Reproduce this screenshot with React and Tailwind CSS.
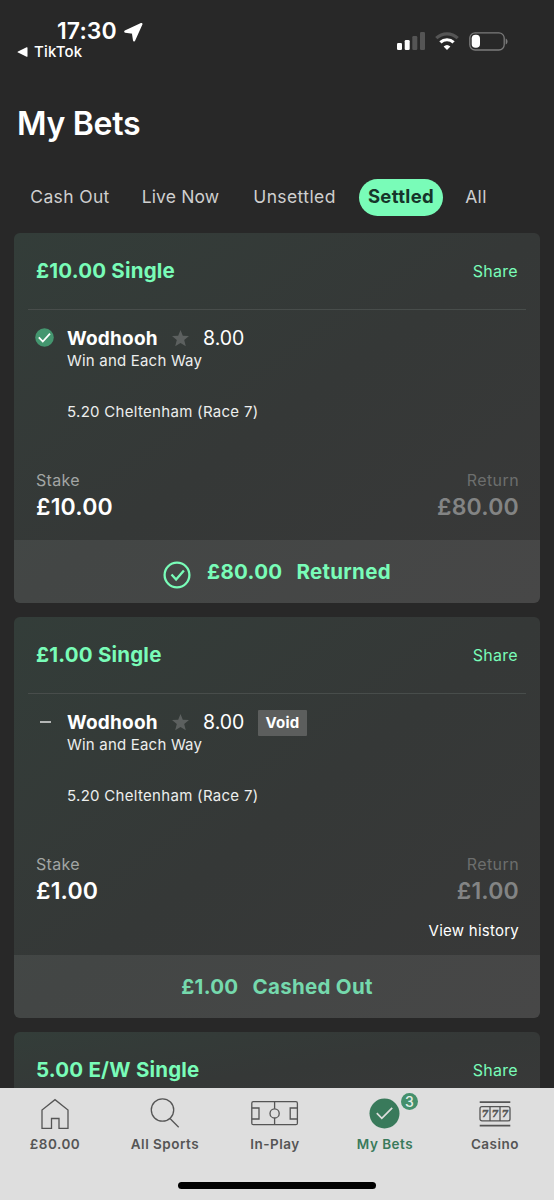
import React, { useState } from "react";

const TABS = [
  { name: "Cash Out", box: "w-[112px]", text: "tracking-[0.35px]" },
  { name: "Live Now", box: "w-[109px]", text: "tracking-[0.15px]" },
  { name: "Unsettled", box: "w-[119px]", text: "tracking-[0.4px]" },
  { name: "Settled", box: "w-[94px]", text: "tracking-[0.35px]" },
  { name: "All", box: "w-[56px]", text: "tracking-[0.35px]" },
];

const BETS = [
  { id: 1, title: "£10.00 Single", stake: "£10.00", returned: "£80.00", status: "won", footer: ["£80.00", "Returned"] },
  { id: 2, title: "£1.00 Single", stake: "£1.00", returned: "£1.00", status: "void", history: true, footer: ["£1.00", "Cashed Out"] },
  { id: 3, title: "5.00 E/W Single", collapsed: true },
];

function StatusBar() {
  return (
    <div className="h-[72px] flex justify-between pt-[18px] pl-[17px] pr-[46px]">
      <div>
        <div className="flex items-center gap-[7px] pl-[40px] pt-px h-[26px]">
          <span className="text-[23px] leading-[25px] font-semibold tracking-[0.1px]">17:30</span>
          <svg width="19" height="20" viewBox="0 0 19 20" fill="currentColor" stroke="currentColor" strokeWidth="2.200" strokeLinejoin="round">
            <path d="M17.400 2 1.300 9.600 8.900 10.600 10.100 18.300Z" />
          </svg>
        </div>
        <div className="flex items-center gap-[6px] h-[16px]">
          <svg width="11" height="10" viewBox="0 0 11 10" fill="currentColor">
            <path d="M10.500.8v8.400c0 .5-.4.700-.9.500L1 5.600c-.6-.3-.6-.900 0-1.200L9.600.3c.5-.2.900 0 .9.500Z" />
          </svg>
          <span className="text-[15px] leading-[18px] font-medium tracking-[0.2px]">TikTok</span>
        </div>
      </div>

      <div className="flex items-center gap-[10px] h-[46px]">
        <svg width="28" height="18" viewBox="0 0 28 18">
          <rect x="0" y="11" width="5" height="7" rx="1.300" fill="#fff" />
          <rect x="7.700" y="8" width="5" height="10" rx="1.300" fill="#fff" />
          <rect x="15.300" y="4" width="5" height="14" rx="1.300" fill="#555" />
          <rect x="23" y="0" width="5" height="18" rx="1.300" fill="#555" />
        </svg>
        <svg width="24" height="18" viewBox="0 0 24 18" fill="none" strokeWidth="3.200">
          <path d="M1.300 6.200a15.600 15.600 0 0 1 21.400 0" stroke="#555" />
          <path d="M5.400 10.400a9.600 9.600 0 0 1 13.200 0" stroke="#fff" />
          <path d="M12 18 8.600 14.500a5 5 0 0 1 6.800 0Z" fill="#fff" />
        </svg>
        <svg width="39" height="19" viewBox="0 0 39 19">
          <rect x=".8" y=".8" width="34.400" height="17.200" rx="5.300" fill="none" stroke="#7b7b7b" strokeWidth="1.300" />
          <rect x="2.700" y="2.800" width="8.300" height="13" rx="3.800" fill="#fff" />
          <path d="M36.700 6.500c2.400 1 2.400 5 0 6Z" fill="#7b7b7b" />
        </svg>
      </div>
    </div>
  );
}

function WonIcon() {
  return (
    <svg width="19" height="19" viewBox="0 0 19 19">
      <circle cx="9.500" cy="9.500" r="9.300" fill="#44966f" />
      <path d="m3.800 9.300 4 4.200 7.200-7.800" fill="none" stroke="#fff" strokeWidth="1.800" />
    </svg>
  );
}

function Star() {
  return (
    <svg className="-mt-px" width="17" height="17" viewBox="0 0 17 17" fill="#5c605f">
      <path d="M8.500 0l2.300 5.700 6.200.4-4.800 4 1.600 6.200-5.300-3.400-5.300 3.400 1.600-6.200L0 6.100l6.200-.4Z" />
    </svg>
  );
}

function BetHeader({ title }) {
  return (
    <div className="mx-[14px] px-2 h-[77px] flex items-center justify-between border-b border-[#484d4b] text-[#79fcb8]">
      <span className="text-[20.500px] font-bold tracking-[0.2px]">{title}</span>
      <span className="text-[16px] tracking-[0.3px] pb-px">Share</span>
    </div>
  );
}

function BetDetails({ bet }) {
  return (
    <>
      <div className="flex pl-[21px] pt-4">
        <div className="w-[32px] pt-[2px]">
          {bet.status === "won" ? <WonIcon /> : <div className="w-[11px] h-[1.500px] bg-[#b4b7b6] ml-[5px] mt-[9px]" />}
        </div>
        <div>
          <div className="flex items-center h-[26px]">
            <span className="text-[19px] font-bold tracking-[0.2px] w-[105px]">Wodhooh</span>
            <Star />
            <span className="text-[19.500px] w-[69px] pl-[14px]">8.00</span>
            {bet.status === "void" && (
              <span className="bg-[#5c5e5d] rounded-[1px] w-[49px] h-[26px] flex items-center justify-center text-[15px] font-bold tracking-[0.3px]">Void</span>
            )}
          </div>
          <div className="text-[15px] leading-[18px] tracking-[0.2px] text-[#eceeed]">Win and Each Way</div>
          <div className="text-[15px] leading-[20px] tracking-[0.3px] text-[#eceeed] mt-[32px]">5.20 Cheltenham (Race 7)</div>
        </div>
      </div>

      <div className="flex justify-between pl-[22px] pr-[21px] mt-[48px]">
        <div>
          <div className="text-[16px] leading-[20px] tracking-[0.3px] text-[#a2a5a4]">Stake</div>
          <div className="text-[23px] leading-[35px] font-semibold tracking-[0.2px]">{bet.stake}</div>
        </div>
        <div className="text-right">
          <div className="text-[16px] leading-[20px] tracking-[0.4px] text-[#6c6e6d]">Return</div>
          <div className="text-[23px] leading-[35px] font-semibold tracking-[0.2px] text-[#838484]">{bet.returned}</div>
        </div>
      </div>
      {bet.history && <div className="px-[21px] pt-[12px] h-[31px] text-right text-[15px] leading-[20px] tracking-[0.25px]">View history</div>}

      <div className={`mt-[15px] h-[63px] pt-px bg-white/7 flex items-center justify-center text-[20.500px] font-bold tracking-[0.3px] ${bet.status === "won" ? "text-[#79fcb8]" : "text-[#75d9ad]"}`}>
        {bet.status === "won" && (
          <svg className="mr-4 mt-[6px]" width="28" height="28" viewBox="0 0 28 28" fill="none" stroke="currentColor" strokeWidth="2.300">
            <circle cx="14" cy="14" r="12.400" />
            <path d="m8.500 13.500 4.600 5 7.800-9" />
          </svg>
        )}
        <span className="mr-[14px]">{bet.footer[0]}</span>
        <span>{bet.footer[1]}</span>
      </div>
    </>
  );
}

function BetCard({ bet }) {
  return (
    <div className="rounded-[6px] overflow-hidden bg-linear-to-br from-[#333d39] via-[#353837] to-[#393939]">
      <BetHeader title={bet.title} />
      {!bet.collapsed && <BetDetails bet={bet} />}
    </div>
  );
}

function HomeIcon() {
  return (
    <svg width="30" height="32" viewBox="0 0 30 32" fill="none" stroke="currentColor" strokeWidth="1.300">
      <path d="M2 30.300V12L15 1.700 28 12v18.300h-9v-9.800h-7.500v9.800Z" />
    </svg>
  );
}

function SearchIcon() {
  return (
    <svg width="30" height="32" viewBox="0 0 30 32" fill="none" stroke="currentColor" strokeWidth="1.300">
      <circle cx="12.500" cy="12" r="11.200" />
      <path d="m20 20.500 8.700 8.700" />
    </svg>
  );
}

function PitchIcon() {
  return (
    <svg width="48" height="32" viewBox="0 0 48 32" fill="none" stroke="currentColor" strokeWidth="1.300">
      <rect x=".8" y="3.700" width="45.600" height="23" rx="1.500" />
      <path d="M23.600 3.700v7m0 9.300v6.700M.8 10h7.200v11H.8M46.400 10h-7.200v11h7.200" />
      <circle cx="23.600" cy="15.400" r="4.600" />
    </svg>
  );
}

function SlotsIcon() {
  return (
    <svg width="32" height="32" viewBox="0 0 32 32" fill="none" stroke="currentColor" strokeWidth="1.300">
      <path d="M.7 4.100h30.600M.7 27.700h30.600" strokeWidth="1.800" />
      <rect x="1" y="8.700" width="30" height="14.200" rx="2" />
      <path d="M11 8.700v14.200M21 8.700v14.200" />
      <g fill="currentColor" stroke="currentColor" strokeWidth=".5" fontFamily="DejaVu Serif, serif" fontWeight="700" fontStyle="italic" fontSize="9.500" textAnchor="middle">
        <text x="6.100" y="19.300">7</text>
        <text x="16" y="19.300">7</text>
        <text x="26" y="19.300">7</text>
      </g>
    </svg>
  );
}

function MyBetsIcon() {
  return (
    <div className="relative">
      <svg width="32" height="32" viewBox="0 0 32 32">
        <circle cx="15.500" cy="15.500" r="15" fill="#397a5b" />
        <path d="m7.800 15.200 5 5.200 10.400-10.600" fill="none" stroke="#dedede" strokeWidth="1.700" />
      </svg>
      <span className="absolute -top-[5px] left-[32px] w-[17px] h-[17px] rounded-full bg-[#44906c] text-[#e6eee9] text-[14px] font-medium flex items-center justify-center">3</span>
    </div>
  );
}

const NAV = [
  { name: "£80.00", Icon: HomeIcon },
  { name: "All Sports", Icon: SearchIcon },
  { name: "In-Play", Icon: PitchIcon },
  { name: "My Bets", Icon: MyBetsIcon, active: true },
  { name: "Casino", Icon: SlotsIcon },
];

function BottomNav() {
  return (
    <nav className="h-[112px] shrink-0 bg-[#dedede] text-[#555] flex flex-col items-center">
      <div className="flex w-full pr-[4px] pt-[10px]">
        {NAV.map(({ name, Icon, active }) => (
          <button key={name} className={`flex-1 flex flex-col items-center ${active ? "text-[#397a5b]" : ""}`}>
            <Icon />
            <span className="text-[13.500px] leading-[18px] mt-[5px] font-semibold tracking-[0.5px]">{name}</span>
          </button>
        ))}
      </div>
      <div className="w-[198px] h-[7px] rounded-full bg-black mt-[29px]" />
    </nav>
  );
}

export default function App() {
  const [tab, setTab] = useState("Settled");

  return (
    <div className="h-[1200px] w-[554px] flex flex-col overflow-hidden bg-[#282828] text-white font-['Inter',sans-serif]">
      <StatusBar />
      <h1 className="pl-[17px] pt-[32px] text-[32px] leading-[40px] font-semibold tracking-[-0.3px]">My Bets</h1>

      <div className="flex pl-[14px] mt-[35px] h-[37px] mb-[17px] shrink-0">
        {TABS.map((t) => (
          <button key={t.name} onClick={() => setTab(t.name)} className={`${t.box} flex justify-center`}>
            <span className={`h-[37px] flex items-center whitespace-nowrap ${t.text} ${
              tab === t.name ? "w-[84px] justify-center rounded-full bg-[#79fcb8] text-[#16352a] font-bold text-[18.500px] pb-px" : "text-[#cfcfcf] text-[17.500px]"}`}>
              {t.name}
            </span>
          </button>
        ))}
      </div>

      <div className="flex-1 min-h-0 overflow-hidden px-[14px] flex flex-col">
        <div className="flex flex-col gap-[14px]">
          {BETS.map((bet) => <BetCard key={bet.id} bet={bet} />)}
        </div>
      </div>

      <BottomNav />
    </div>
  );
}
